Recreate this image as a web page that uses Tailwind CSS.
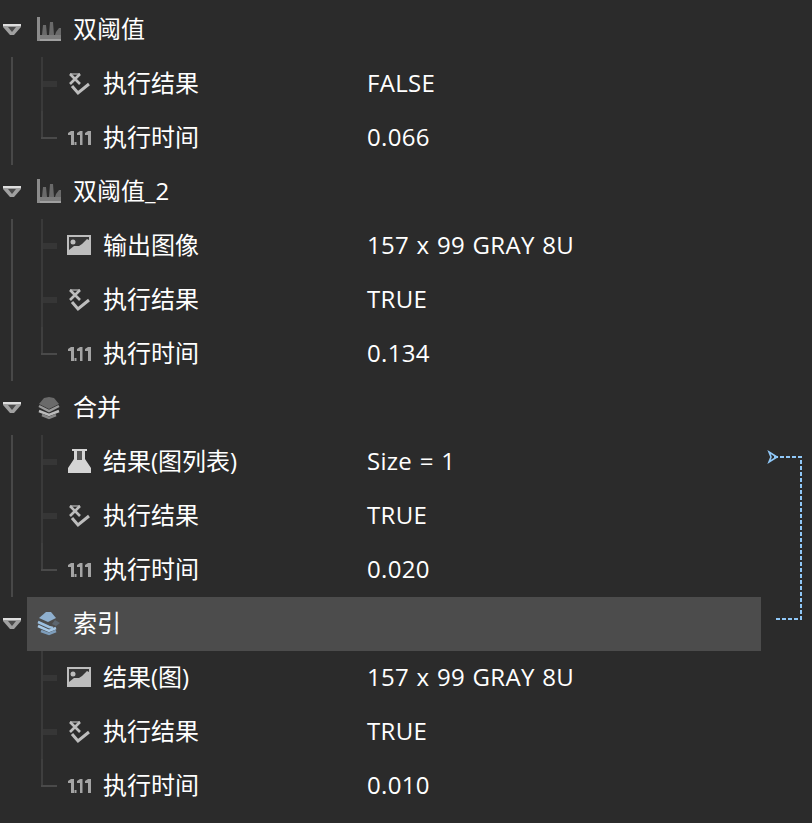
<!DOCTYPE html>
<html lang="en">
<head>
  <meta charset="UTF-8" />
  <title>结果树</title>
  <script src="https://cdn.jsdelivr.net/npm/@tailwindcss/browser@4"></script>
</head>
<body class="bg-[#2b2b2b] overflow-hidden">
  <div id="tree" class="relative w-[812px] h-[823px] pt-[3px] text-white text-[24px] font-['Open_Sans','Noto_Sans_CJK_SC',sans-serif]"></div>

  <!-- icon templates -->
  <template id="icon-chart">
    <svg class="w-[26px] h-[26px]" viewBox="0 0 26 26"><path d="M1 0h3v24H1z" fill="#8c8c8c"/><path d="M4 18h21v6H4z" fill="#7c7c7c"/><path d="M6 18l1-10h3l1 10zM13 18l1-13h3l1 13zM19 18l1-3 3-4 2 0v7z" fill="#6a6a6a"/><path d="M4 22h21v2H4z" fill="#a0a0a0"/></svg>
  </template>
  <template id="icon-check">
    <svg class="w-[26px] h-[26px]" viewBox="0 0 26 26" fill="none" stroke="#bdbdbd" stroke-width="2.6"><path d="M3 3h10" stroke="#808080" stroke-width="2"/><path d="M3 3l10 10M13 3L3 13"/><path d="M5 15l6 7 11-9" stroke-width="3"/></svg>
  </template>
  <template id="icon-num">
    <svg class="w-[26px] h-[26px]" viewBox="0 0 26 26"><path d="M1 8l3-2h3v14H4v-10H1zM7.500 17h2v3h-2zM10 8l3-2h2.500v14H13v-10h-3zM18 8l3-2h3v14h-3v-10h-3z" fill="#a4a4a4"/></svg>
  </template>
  <template id="icon-image">
    <svg class="w-[26px] h-[26px]" viewBox="0 0 26 26"><path d="M0 2h24v20H0z" fill="#bdbdbd"/><path d="M2 4h20v13H2z" fill="#363636"/><path d="M2 17l5-4h5l3-2 5-5 2 1v10z" fill="#bdbdbd"/><circle cx="6" cy="9" r="2.500" fill="#bdbdbd"/></svg>
  </template>
  <template id="icon-flask">
    <svg class="w-[26px] h-[26px]" viewBox="0 0 26 26"><path d="M5 0h15v2h-2v8l6 9v5H1v-5l6-9V2H5z" fill="#d4d4d4"/><path d="M10 2h5v9h-5z" fill="#555"/></svg>
  </template>
  <template id="icon-stack">
    <svg class="w-[26px] h-[26px]" viewBox="0 0 26 26" fill="none" stroke-width="2.5"><path d="M3 9l5-6 5-1 5 1 5 6-10 5z" fill="#6a6a6a"/><path d="M3 11l10 5 10-5" stroke="#999"/><path d="M3 16l10 4 10-4" stroke="#bbb"/><path d="M6 20l7 3 7-3" stroke="#888"/></svg>
  </template>
  <template id="icon-stack-blue">
    <svg class="w-[26px] h-[26px]" viewBox="0 0 26 26" fill="none" stroke-width="2.5"><path d="M3 7l7-6h5l5 6-8 4z" fill="#8fb0cf"/><path d="M19 9l5 3-4 3-4-2z" fill="#5c6670"/><path d="M2 11l11 5 4 1" stroke="#9cc0e0"/><path d="M2 15l11 5 7-3" stroke="#a6c8e6"/><path d="M5 20l8 3 7-3" stroke="#7d9dbb"/></svg>
  </template>

  <script>
    const groups = [
      { name: '双阈值', icon: 'chart', rows: [['check', '执行结果', 'FALSE'], ['num', '执行时间', '0.066']] },
      { name: '双阈值_2', icon: 'chart', rows: [['image', '输出图像', '157 x 99 GRAY 8U'], ['check', '执行结果', 'TRUE'], ['num', '执行时间', '0.134']] },
      { name: '合并', icon: 'stack', rows: [['flask', '结果(图列表)', 'Size = 1'], ['check', '执行结果', 'TRUE'], ['num', '执行时间', '0.020']] },
      { name: '索引', icon: 'stack-blue', selected: true, last: true, rows: [['image', '结果(图)', '157 x 99 GRAY 8U'], ['check', '执行结果', 'TRUE'], ['num', '执行时间', '0.010']] }
    ];

    const icon = name => document.getElementById('icon-' + name).innerHTML;

    const caret = `<svg class="w-[18px] h-[12px]" viewBox="0 0 18 12"><path d="M0 0h18v3l-7 8H7L0 3z" fill="#a0a0a0"/><path d="M0 0h18v2H0z" fill="#dedede"/><path d="M5 3h8l-4 5z" fill="#4a4a4a"/></svg>`;

    function renderRow(row, isLast) {
      const [ic, label, value] = row;
      return `
        <div class="relative flex items-center h-[54px]">
          ${isLast
            ? `<span class="absolute left-0 top-0 w-[2px] h-[28px] bg-[#3f3f3f]"></span><span class="absolute left-0 top-[26px] w-[16px] h-[2px] bg-[#4a4a4a]"></span>`
            : `<span class="absolute left-0 top-0 w-[2px] h-[54px] bg-[#3a3a3a]"></span><span class="absolute left-[2px] top-[24px] w-[14px] h-[6px] bg-[#363636]"></span>`}
          <span class="ml-[26px] w-[26px] h-[26px]">${icon(ic)}</span>
          <span class="ml-[10px] w-[264px] pb-[2px]">${label}</span>
          <span class="pb-[2px] tracking-[0.3px] [word-spacing:1px]">${value}</span>
        </div>`;
    }

    function renderGroup(g) {
      return `
        <div>
          <div class="flex items-center h-[54px]">
            <span class="ml-[3px] w-[24px]">${caret}</span>
            <div class="flex items-center w-[734px] h-[54px] ${g.selected ? 'bg-[#4c4c4c]' : ''}">
              <span class="ml-[9px] w-[26px] h-[26px]">${icon(g.icon)}</span>
              <span class="ml-[11px] pb-[2px]">${g.name}</span>
            </div>
          </div>
          <div class="ml-[11px] pl-[28px] border-l-2 ${g.last ? 'border-transparent' : 'border-[#484848]'}">
            ${g.rows.map((r, i) => renderRow(r, i === g.rows.length - 1)).join('')}
          </div>
        </div>`;
    }

    document.getElementById('tree').innerHTML = groups.map(renderGroup).join('') + `
      <svg class="absolute left-[764px] top-[446px] w-[44px] h-[180px]" viewBox="0 0 44 180" fill="none" stroke="#90c8f8">
        <path d="M10 11H37V173H10" stroke-width="2" stroke-dasharray="4 2"/>
        <path d="M5 6l8 5-8 5 2-5z" stroke-width="1.6"/>
      </svg>`;
  </script>
</body>
</html>
